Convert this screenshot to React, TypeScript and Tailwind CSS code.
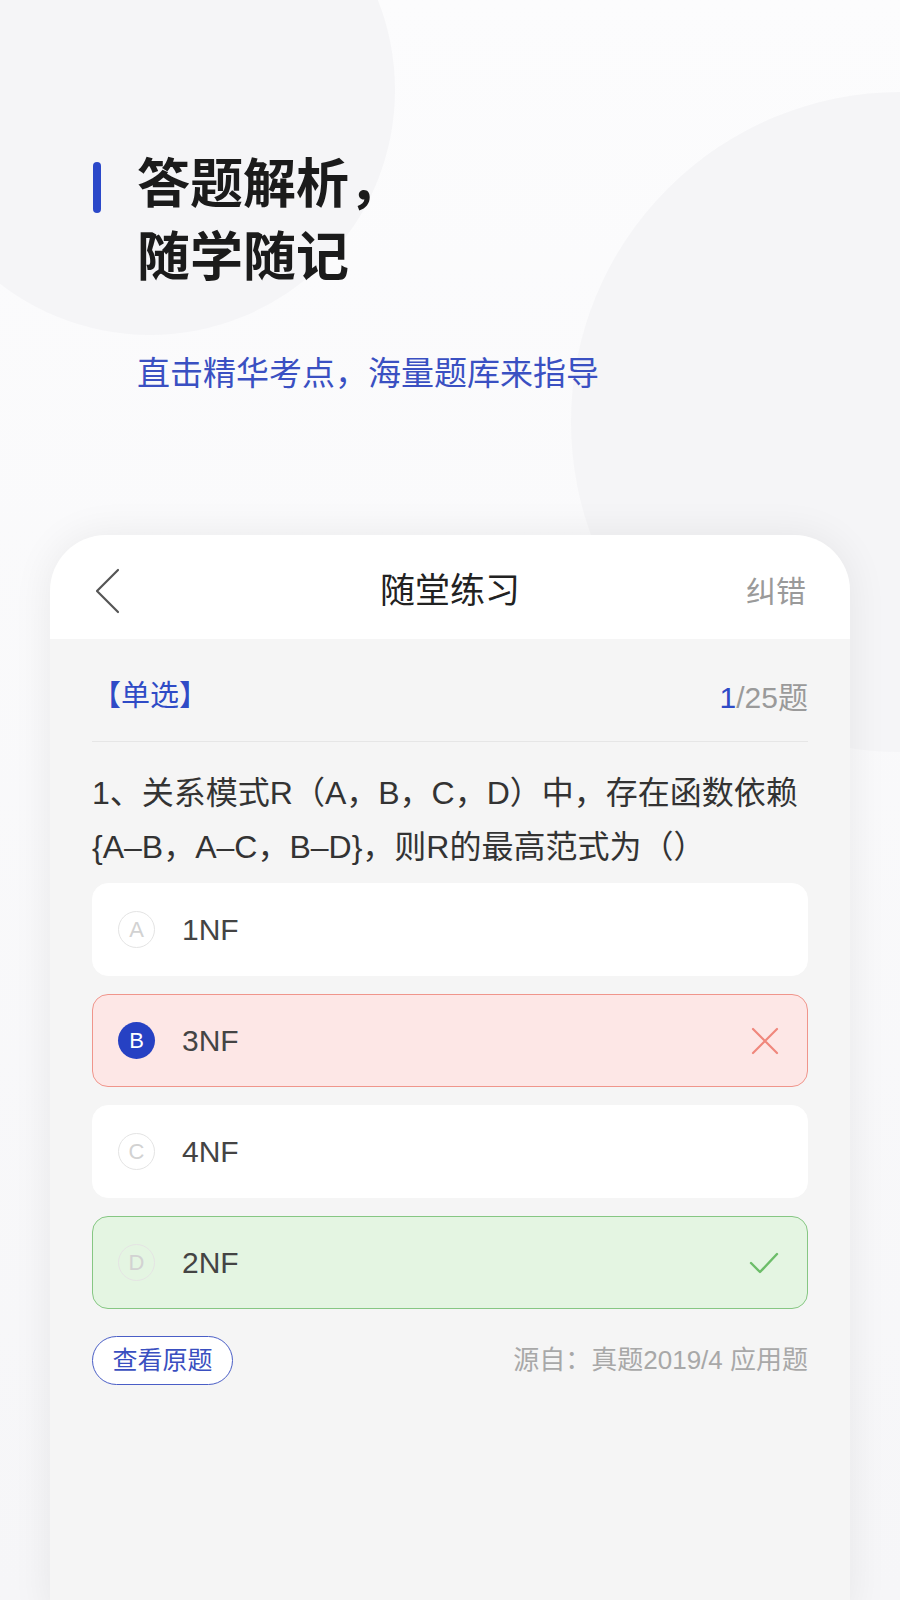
import React from "react";

const font = "font-['Liberation_Sans','Noto_Sans_CJK_SC',sans-serif]";

type Opt = {
  key: string;
  text: string;
  state: "none" | "wrong" | "right";
};

const options: Opt[] = [
  { key: "A", text: "1NF", state: "none" },
  { key: "B", text: "3NF", state: "wrong" },
  { key: "C", text: "4NF", state: "none" },
  { key: "D", text: "2NF", state: "right" },
];

function Option({ opt }: { opt: Opt }) {
  const box =
    opt.state === "wrong"
      ? "bg-[#fde7e6] border-[1.5px] border-[#f0958b]"
      : opt.state === "right"
        ? "bg-[#e4f5e2] border-[1.5px] border-[#86c783]"
        : "bg-white border-[1.5px] border-white";
  const selected = opt.state === "wrong";
  return (
    <div className={`h-[93px] rounded-[16px] flex items-center pl-[25px] pr-[28px] ${box}`}>
      <div
        className={
          selected
            ? "w-[37px] h-[37px] rounded-full bg-[#2641c3] text-white flex items-center justify-center text-[22px]"
            : "w-[37px] h-[37px] rounded-full border border-[#e4e4e4] text-[#d2d2d2] flex items-center justify-center text-[22px]"
        }
      >
        {opt.key}
      </div>
      <div className="ml-[27px] text-[30px] text-[#444]">{opt.text}</div>
      <div className="ml-auto">
        {opt.state === "wrong" && (
          <svg width="28" height="28" viewBox="0 0 28 28" fill="none">
            <path d="M2 2L26 26M26 2L2 26" stroke="#f0877c" strokeWidth="2.2" strokeLinecap="round" />
          </svg>
        )}
        {opt.state === "right" && (
          <svg width="30" height="24" viewBox="0 0 30 24" fill="none">
            <path d="M2 12L11 21L28 3" stroke="#6cbd69" strokeWidth="2.4" strokeLinecap="round" strokeLinejoin="round" />
          </svg>
        )}
      </div>
    </div>
  );
}

export default function App() {
  return (
    <div className={`relative w-[900px] h-[1600px] overflow-hidden bg-gradient-to-b from-[#fcfcfd] to-[#f6f6f8] ${font}`}>
      {/* soft background circles */}
      <div className="absolute left-[-95px] top-[-155px] w-[490px] h-[490px] rounded-full bg-[#f5f5f7]" />
      <div className="absolute left-[571px] top-[92px] w-[660px] h-[660px] rounded-full bg-[#f5f5f7]" />

      <div className="relative">
        {/* Headline */}
        <div className="pt-[148px] pl-[93px]">
          <div className="flex">
            <div className="w-[8px] h-[51px] mt-[14px] rounded-full bg-[#2b48c9]" />
            <h1 className="ml-[36px] text-[53px] leading-[73px] font-bold text-[#1b1b1b]">
              答题解析，
              <br />
              随学随记
            </h1>
          </div>
          <p className="mt-[60px] ml-[44px] text-[33px] leading-[40px] text-[#3a50c2]">
            直击精华考点，海量题库来指导
          </p>
        </div>

        {/* Phone card */}
        <div className="mt-[141px] mx-[50px] h-[1080px] rounded-t-[56px] overflow-hidden bg-[#f5f5f5] shadow-[0_0_40px_rgba(0,0,0,0.07)]">
          <div className="h-[104px] pt-[8px] bg-white grid grid-cols-[1fr_auto_1fr] items-center px-[44px]">
            <svg width="28" height="46" viewBox="0 0 28 46" fill="none">
              <path d="M24 2L3 23L24 44" stroke="#555" strokeWidth="2.2" strokeLinecap="round" strokeLinejoin="round" />
            </svg>
            <div className="text-[35px] text-[#222]">随堂练习</div>
            <div className="justify-self-end text-[30px] text-[#9a9a9a]">纠错</div>
          </div>

          <div className="px-[42px] pt-[38px]">
            <div className="h-[40px] flex items-center justify-between text-[29px]">
              <span className="text-[#2f4bc6]">【单选】</span>
              <span className="text-[#9a9a9a] text-[30px]">
                <span className="text-[#2f4bc6]">1</span>/25题
              </span>
            </div>
            <div className="mt-[24px] h-px bg-[#e6e6e6]" />

            <p className="mt-[24px] text-[32px] leading-[54px] text-[#333] whitespace-nowrap">
              1、关系模式R（A，B，C，D）中，存在函数依赖
              <br />
              {"{A–B，A–C，B–D}，则R的最高范式为（）"}
            </p>

            <div className="mt-[9px] flex flex-col gap-[18px]">
              {options.map((o) => (
                <Option key={o.key} opt={o} />
              ))}
            </div>

            <div className="mt-[27px] flex items-center justify-between">
              <button className="h-[49px] w-[141px] rounded-full border border-[#4a5ec6] bg-white text-[25px] text-[#3a4fc0]">
                查看原题
              </button>
              <span className="text-[26px] text-[#a8a8a8]">源自：真题2019/4 应用题</span>
            </div>
          </div>
        </div>
      </div>
    </div>
  );
}
